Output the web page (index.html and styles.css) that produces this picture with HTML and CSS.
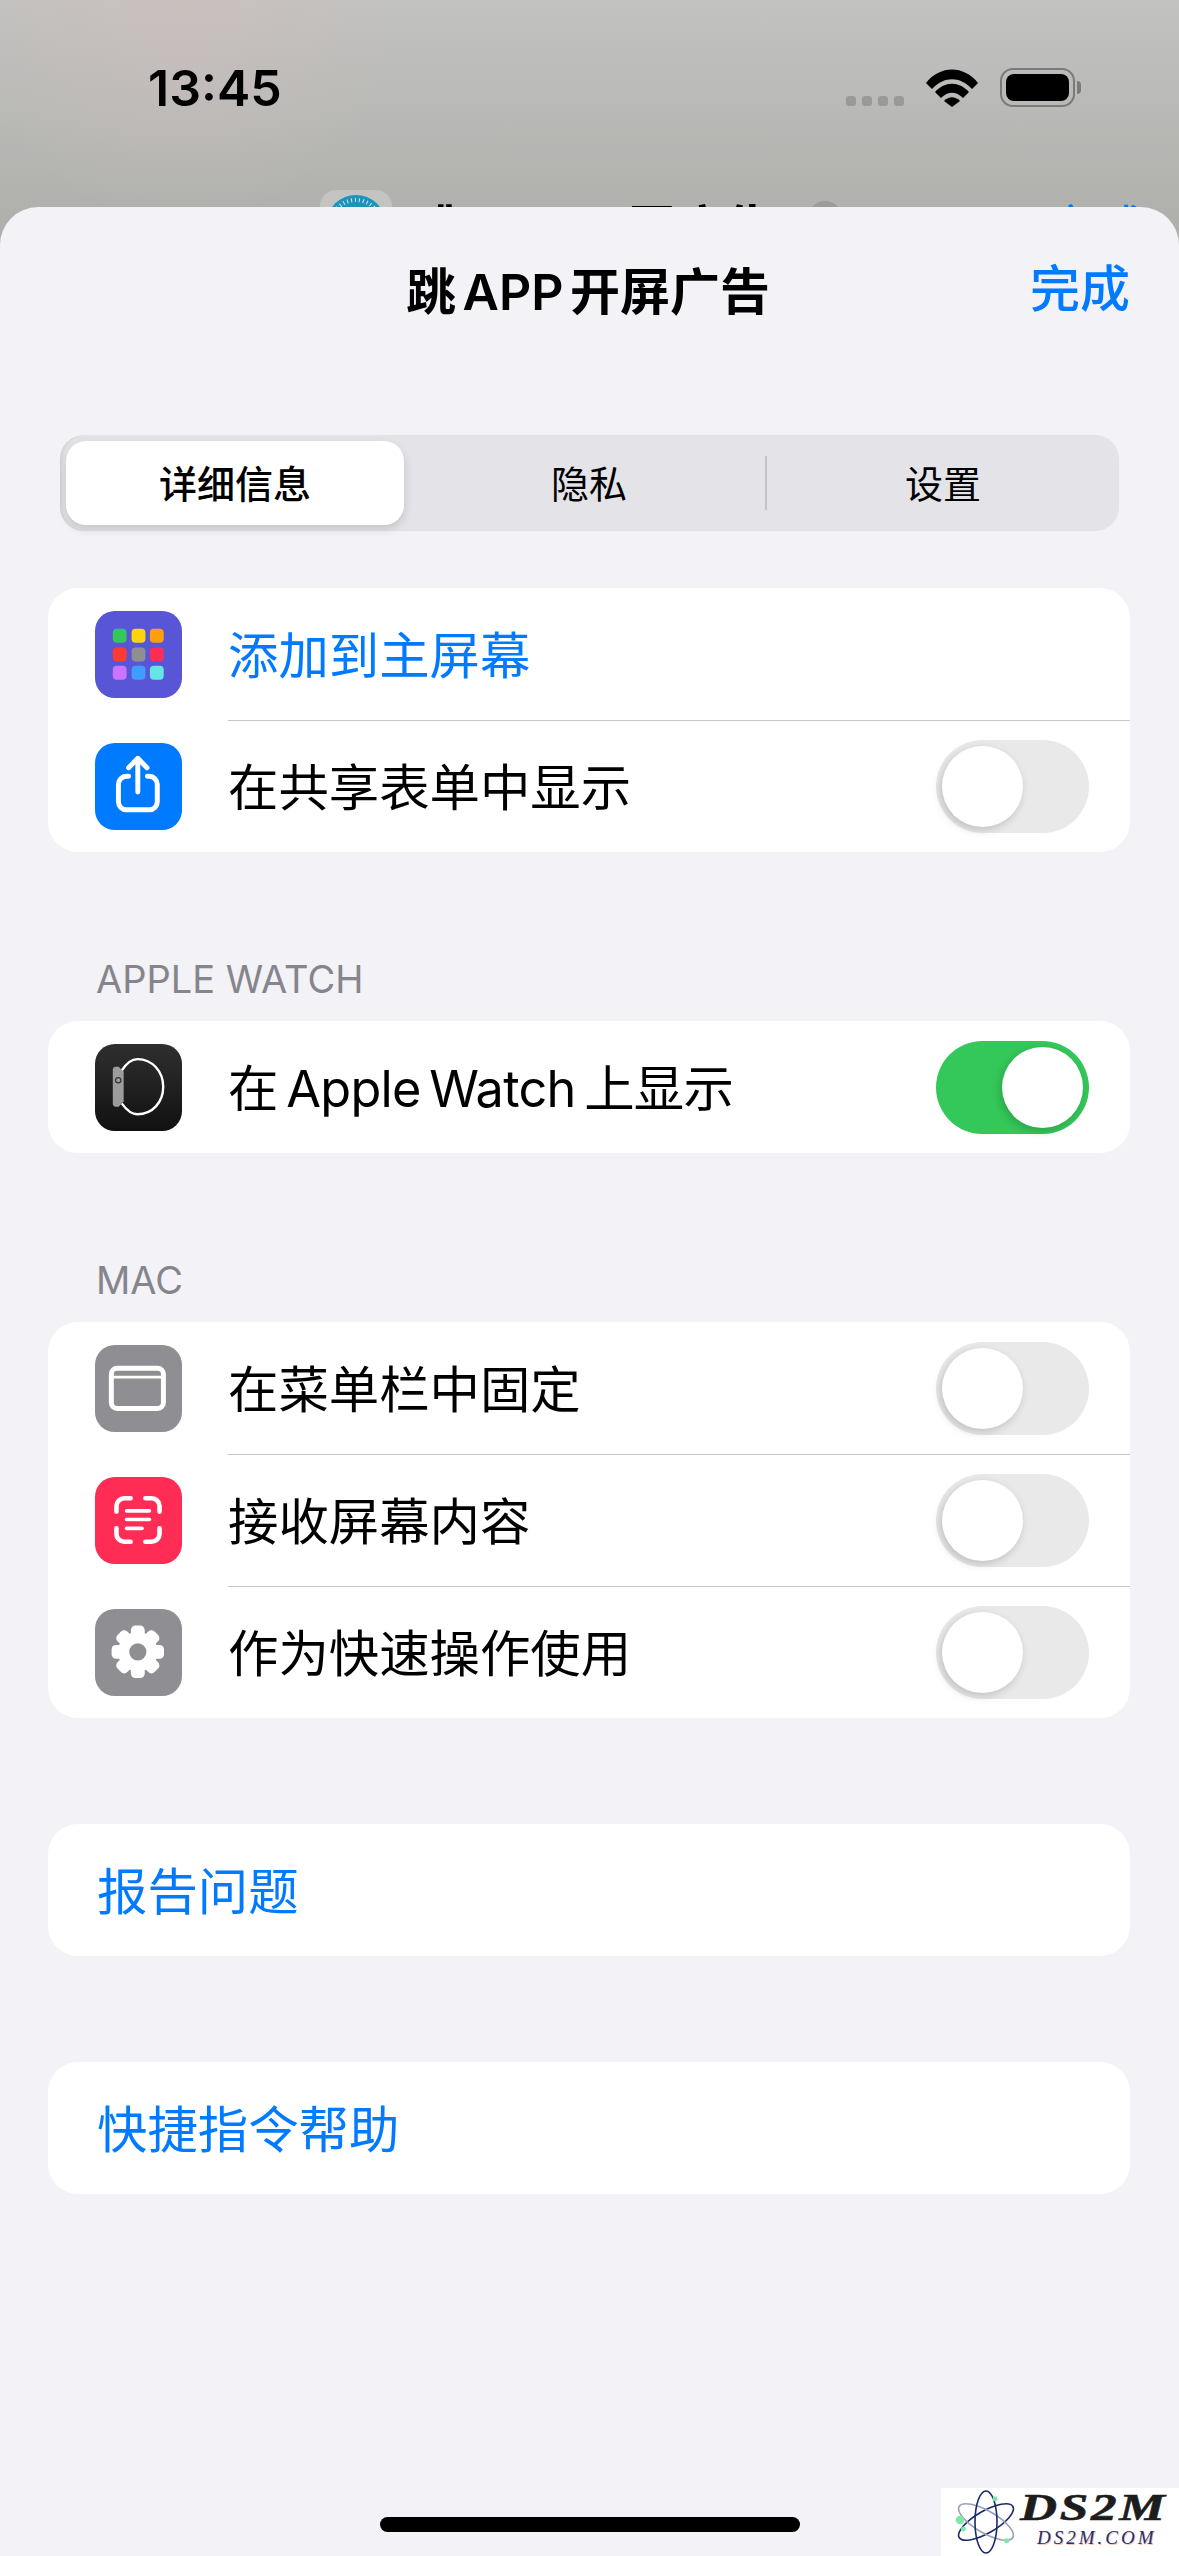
FILE: index.html
```html
<!DOCTYPE html>
<html lang="zh-CN">

<head>
    <meta charset="UTF-8">
    <meta name="viewport" content="width=device-width, initial-scale=1.0">
    <title>跳APP开屏广告</title>
    <link rel="stylesheet" href="styles.css">
</head>

<body>
    <!-- 背后的页面 -->
    <div class="backdrop">
        <div class="status-bar">
            <span class="time">13:45</span>
            <div class="status-icons">
                <div class="signal"><i></i><i></i><i></i><i></i></div>
                <svg class="wifi" width="52" height="38" viewBox="0 0 52 38">
                    <path d="M0 14 C14 -4 38 -4 52 14 L46 20 C34 7 18 7 6 20 Z" />
                    <path d="M9 23 C19 12 33 12 43 23 L37 29 C30 22 22 22 15 29 Z" />
                    <path d="M18 32 C23 27 29 27 34 32 L26 38 Z" />
                </svg>
                <div class="battery">
                    <div class="battery-body"><div class="battery-fill"></div></div>
                    <div class="battery-cap"></div>
                </div>
            </div>
        </div>
        <div class="behind-title">
            <div class="behind-icon">
                <svg width="60" height="60" viewBox="0 0 60 60">
                    <circle cx="30" cy="30" r="30" fill="#1c94ba" />
                    <circle cx="30" cy="30" r="25" fill="none" stroke="#cfe8ee" stroke-width="4" stroke-dasharray="1 3" />
                </svg>
            </div>
            <span class="behind-text">跳 APP 开屏广告</span>
            <div class="behind-dot"></div>
            <span class="behind-done">完成</span>
        </div>
    </div>

    <div class="sheet">
        <div class="sheet-header">
            <h1 class="sheet-title">跳 APP 开屏广告</h1>
            <span class="sheet-done">完成</span>
        </div>

        <div class="segments">
            <div class="segment active"><span>详细信息</span></div>
            <div class="segment"><span>隐私</span></div>
            <div class="segment-line"></div>
            <div class="segment"><span>设置</span></div>
        </div>

        <div class="card first-card">
            <div class="row">
                <svg class="icon" viewBox="0 0 88 88">
                    <rect width="88" height="88" rx="20" fill="#5856d6" />
                    <rect x="18" y="18" width="14" height="14" rx="4" fill="#34c759" />
                    <rect x="37" y="18" width="14" height="14" rx="4" fill="#ffd60a" />
                    <rect x="55.500" y="18" width="14" height="14" rx="4" fill="#ff9f0a" />
                    <rect x="18" y="37" width="14" height="14" rx="4" fill="#ff3b30" />
                    <rect x="37" y="37" width="14" height="14" rx="4" fill="#8e8e93" />
                    <rect x="55.500" y="37" width="14" height="14" rx="4" fill="#ff2d55" />
                    <rect x="18" y="55.500" width="14" height="14" rx="4" fill="#cc73ff" />
                    <rect x="37" y="55.500" width="14" height="14" rx="4" fill="#409cff" />
                    <rect x="55.500" y="55.500" width="14" height="14" rx="4" fill="#64e6e2" />
                </svg>
                <div class="row-body"><span class="link">添加到主屏幕</span></div>
            </div>
            <div class="row">
                <svg class="icon" viewBox="0 0 88 88">
                    <rect width="88" height="88" rx="20" fill="#007aff" />
                    <g fill="none" stroke="#fff" stroke-width="5" stroke-linecap="round" stroke-linejoin="round">
                        <path d="M34 33.700 H31.700 a8 8 0 0 0 -8 8 V59.500 a8 8 0 0 0 8 8 H55 a8 8 0 0 0 8 -8 V41.700 a8 8 0 0 0 -8 -8 H53" />
                        <path d="M43.300 49.500 V16" />
                        <path d="M34 25 L43.300 15.500 L52.600 25" />
                    </g>
                </svg>
                <div class="row-body with-line">
                    <span>在共享表单中显示</span>
                    <div class="toggle"><div class="thumb"></div></div>
                </div>
            </div>
        </div>

        <div class="section-label">APPLE WATCH</div>
        <div class="card">
            <div class="row">
                <svg class="icon" viewBox="0 0 88 88">
                    <defs>
                        <linearGradient id="watchBg" x1="0" y1="0" x2="0" y2="1">
                            <stop offset="0" stop-color="#2f2f2f" />
                            <stop offset="1" stop-color="#111" />
                        </linearGradient>
                    </defs>
                    <rect width="88" height="88" rx="20" fill="url(#watchBg)" />
                    <path d="M27 27 C32 19 38 15.300 43 15.300 C58 15.300 69 28 69 43.300 C69 59 58 71 43 71 C38 71 32 67 27 60" fill="none" stroke="#fff" stroke-width="2.400" />
                    <path d="M21 23 H24 L29 28 V58 L24 63.500 H21 Q18 63.500 18 60 V26 Q18 23 21 23 Z" fill="#9c9c9c" />
                    <circle cx="23.500" cy="36.700" r="2.700" fill="none" stroke="#333" stroke-width="1.200" />
                </svg>
                <div class="row-body">
                    <span class="mixed-text">在 Apple Watch 上显示</span>
                    <div class="toggle on"><div class="thumb"></div></div>
                </div>
            </div>
        </div>

        <div class="section-label">MAC</div>
        <div class="card">
            <div class="row">
                <svg class="icon" viewBox="0 0 88 88">
                    <rect width="88" height="88" rx="20" fill="#8e8e93" />
                    <rect x="16.500" y="23.500" width="52.700" height="40.700" rx="6" fill="none" stroke="#fff" stroke-width="5" />
                    <path d="M17 32.500 H69" stroke="#fff" stroke-width="3" />
                </svg>
                <div class="row-body">
                    <span>在菜单栏中固定</span>
                    <div class="toggle"><div class="thumb"></div></div>
                </div>
            </div>
            <div class="row">
                <svg class="icon" viewBox="0 0 88 88">
                    <rect width="88" height="88" rx="20" fill="#ff2d55" />
                    <g fill="none" stroke="#fff" stroke-linecap="round">
                        <g stroke-width="4.700">
                            <path d="M36 21.500 H29.700 a8 8 0 0 0 -8 8 V35" />
                            <path d="M51 21.500 H57.300 a8 8 0 0 1 8 8 V35" />
                            <path d="M36 65.500 H29.700 a8 8 0 0 1 -8 -8 V52" />
                            <path d="M51 65.500 H57.300 a8 8 0 0 0 8 -8 V52" />
                        </g>
                        <g stroke-width="3.700">
                            <path d="M32 34.300 H55" />
                            <path d="M32 43 H55" />
                            <path d="M32 52 H47.500" />
                        </g>
                    </g>
                </svg>
                <div class="row-body with-line">
                    <span>接收屏幕内容</span>
                    <div class="toggle"><div class="thumb"></div></div>
                </div>
            </div>
            <div class="row">
                <svg class="icon" viewBox="0 0 88 88">
                    <rect width="88" height="88" rx="20" fill="#8e8e93" />
                    <g transform="translate(43.300 43.300)" fill="#fff">
                        <circle r="20" />
                        <rect x="-7" y="-26.500" width="14" height="14" rx="4.500" />
                        <rect x="-7" y="-26.500" width="14" height="14" rx="4.500" transform="rotate(45)" />
                        <rect x="-7" y="-26.500" width="14" height="14" rx="4.500" transform="rotate(90)" />
                        <rect x="-7" y="-26.500" width="14" height="14" rx="4.500" transform="rotate(135)" />
                        <rect x="-7" y="-26.500" width="14" height="14" rx="4.500" transform="rotate(180)" />
                        <rect x="-7" y="-26.500" width="14" height="14" rx="4.500" transform="rotate(225)" />
                        <rect x="-7" y="-26.500" width="14" height="14" rx="4.500" transform="rotate(270)" />
                        <rect x="-7" y="-26.500" width="14" height="14" rx="4.500" transform="rotate(315)" />
                        <circle r="8.700" fill="#8e8e93" />
                    </g>
                </svg>
                <div class="row-body with-line">
                    <span>作为快速操作使用</span>
                    <div class="toggle"><div class="thumb"></div></div>
                </div>
            </div>
        </div>

        <div class="card plain-card"><span class="link">报告问题</span></div>
        <div class="card plain-card"><span class="link">快捷指令帮助</span></div>

        <div class="home-bar"></div>
    </div>

    <!-- 右下角水印 -->
    <div class="watermark">
        <svg class="wm-logo" width="79" height="68" viewBox="0 0 79 68">
            <g fill="none" stroke-width="1.600" transform="translate(45 34)">
                <ellipse rx="31" ry="11" transform="rotate(-30)" stroke="#1c2a6b" />
                <ellipse rx="31" ry="11" transform="rotate(30)" stroke="#9aa0b8" />
                <ellipse rx="31" ry="11" transform="rotate(90)" stroke="#1c2a6b" />
            </g>
            <circle cx="19" cy="32" r="4.300" fill="#7de8a8" />
            <circle cx="54" cy="10.700" r="2.500" fill="#7de8a8" />
            <circle cx="22.300" cy="41" r="2.500" fill="#7de8a8" />
            <circle cx="65.700" cy="52.700" r="2.500" fill="#7de8a8" />
        </svg>
        <div class="wm-text">
            <div class="wm-name">DS2M</div>
            <div class="wm-site">DS2M.COM</div>
        </div>
    </div>
</body>

</html>
```

FILE: styles.css
```css
* {
    box-sizing: border-box;
}

body {
    margin: 0;
    width: 1179px;
    height: 2556px;
    overflow: hidden;
    position: relative;
    font-family: "Inter", "Noto Sans CJK SC", sans-serif;
    color: #000;
    background: #f2f2f7;
}

.backdrop {
    height: 250px;
    overflow: hidden;
    background:
        radial-gradient(circle at 180px 0, rgba(205, 190, 188, 0.6), rgba(205, 190, 188, 0) 220px),
        linear-gradient(180deg, #c2c2c0 0%, #adaeaa 100%);
}

.status-bar {
    height: 190px;
    padding: 59px 98px 0 148px;
    display: flex;
    justify-content: space-between;
    align-items: flex-start;
}

.time {
    font-size: 50px;
    line-height: 58px;
    font-weight: 600;
}

.status-icons {
    display: flex;
    align-items: flex-start;
    padding-top: 9px;
}

.signal {
    display: flex;
    gap: 6px;
    margin-top: 28px;
    margin-right: 22px;
}

.signal i {
    width: 10px;
    height: 10px;
    border-radius: 3px;
    background: #9a9b98;
}

.wifi {
    margin-top: 1px;
    margin-right: 22px;
    fill: #000;
}

.battery {
    display: flex;
    align-items: center;
}

.battery-body {
    width: 75px;
    height: 39px;
    padding: 4px;
    border: 2px solid #7a7a7a;
    border-radius: 13px;
}

.battery-fill {
    height: 100%;
    background: #000;
    border-radius: 8px;
}

.battery-cap {
    width: 4px;
    height: 13px;
    margin-left: 2px;
    background: #7a7a7a;
    border-radius: 0 5px 5px 0;
}

.behind-title {
    display: flex;
    align-items: flex-start;
    padding-left: 320px;
}

.behind-icon {
    flex: none;
    width: 72px;
    height: 72px;
    padding: 5px 6px;
    background: #c3c4c1;
    border-radius: 16px;
}

.behind-icon svg {
    display: block;
}

.behind-text {
    flex: none;
    width: 350px;
    margin-left: 20px;
    margin-top: 9px;
    font-size: 50px;
    line-height: 60px;
    font-weight: 600;
    white-space: nowrap;
    word-spacing: -6px;
}

.behind-dot {
    flex: none;
    width: 34px;
    height: 34px;
    margin-left: 46px;
    margin-top: 11px;
    background: #9c9d9a;
    border-radius: 50%;
}

.behind-done {
    flex: none;
    margin-left: 205px;
    margin-top: 9px;
    font-size: 50px;
    line-height: 60px;
    color: #007aff;
}

.sheet {
    height: 2349px;
    padding: 0 49px 0 48px;
    background: #f2f2f7;
    border-radius: 38px 38px 0 0;
    margin-top: -43px;
    position: relative;
    display: flex;
    flex-direction: column;
}

.sheet-header {
    height: 170px;
    flex: none;
    padding-bottom: 8px;
    position: relative;
    display: flex;
    align-items: center;
    justify-content: center;
}

.sheet-title {
    margin: 0 0 0 -2px;
    font-size: 50px;
    font-weight: 600;
    word-spacing: -6px;
}

.sheet-done {
    position: absolute;
    right: 0;
    top: 46%;
    transform: translateY(-50%);
    font-size: 50px;
    font-weight: 500;
    color: #007aff;
}

.segments {
    flex: none;
    height: 96px;
    margin: 58px 11px 0 12px;
    display: flex;
    align-items: center;
    background: #e3e3e8;
    border-radius: 24px;
    box-shadow: inset 3px 0 3px -1px rgba(0, 0, 0, 0.08);
}

.segment {
    flex: 1;
    height: 100%;
    padding-bottom: 3px;
    display: flex;
    align-items: center;
    justify-content: center;
    font-size: 38px;
}

.segment.active {
    height: 84px;
    margin: 0 9px 0 6px;
    flex: none;
    width: 338px;
    background: #fff;
    border-radius: 20px;
    box-shadow: 0 4px 10px rgba(0, 0, 0, 0.14);
    font-weight: 500;
}

.segment-line {
    flex: none;
    width: 2px;
    height: 54px;
    background: #c4c4c8;
}

.card {
    flex: none;
    background: #fff;
    border-radius: 30px;
    font-size: 50.400px;
}

.first-card {
    margin-top: 57px;
}

.section-label {
    flex: none;
    margin-top: 104px;
    margin-bottom: 19px;
    padding-left: 48px;
    font-size: 38px;
    line-height: 46px;
    color: #85858b;
}

.row {
    height: 132px;
    display: flex;
    align-items: center;
}

.icon {
    flex: none;
    width: 87px;
    height: 87px;
    margin: 1px 46px 0 47px;
}

.row-body {
    flex: 1;
    height: 100%;
    display: flex;
    align-items: center;
    justify-content: space-between;
    padding-right: 41px;
}

.row-body > span {
    padding-bottom: 4px;
}

.mixed-text {
    word-spacing: -5px;
    letter-spacing: -0.700px;
}

.with-line {
    border-top: 1.500px solid #c6c6c8;
}

.link {
    color: #007aff;
}

.toggle {
    width: 153px;
    height: 93px;
    padding: 6px;
    display: flex;
    background: #e9e9ea;
    border-radius: 47px;
}

.toggle.on {
    justify-content: flex-end;
    background: #34c759;
}

.thumb {
    width: 81px;
    height: 81px;
    background: #fff;
    border-radius: 50%;
    box-shadow: -2px 3px 9px rgba(0, 0, 0, 0.18);
}

.plain-card {
    height: 132px;
    margin-top: 106px;
    padding-left: 49px;
    padding-bottom: 3px;
    display: flex;
    align-items: center;
}

.home-bar {
    flex: none;
    width: 420px;
    height: 15px;
    margin: auto 0 24px 332px;
    background: #000;
    border-radius: 8px;
}

.watermark {
    position: absolute;
    right: 0;
    bottom: 0;
    width: 238px;
    height: 68px;
    display: flex;
    background: #fff;
    overflow: hidden;
}

.wm-logo {
    flex: none;
}

.wm-text {
    flex: none;
    font-family: "Liberation Serif", serif;
    font-style: italic;
    font-weight: 700;
}

.wm-name {
    font-size: 38px;
    line-height: 38px;
    letter-spacing: 2px;
    color: #1d1d1d;
    transform: scaleX(1.350);
    transform-origin: left center;
    -webkit-text-stroke: 0.600px #1d1d1d;
}

.wm-site {
    margin-left: 17px;
    font-size: 19px;
    line-height: 24px;
    letter-spacing: 3px;
    font-weight: 400;
    color: #2a2f6b;
    text-shadow: 1px 1px 0 #f2c7b8;
}
```
